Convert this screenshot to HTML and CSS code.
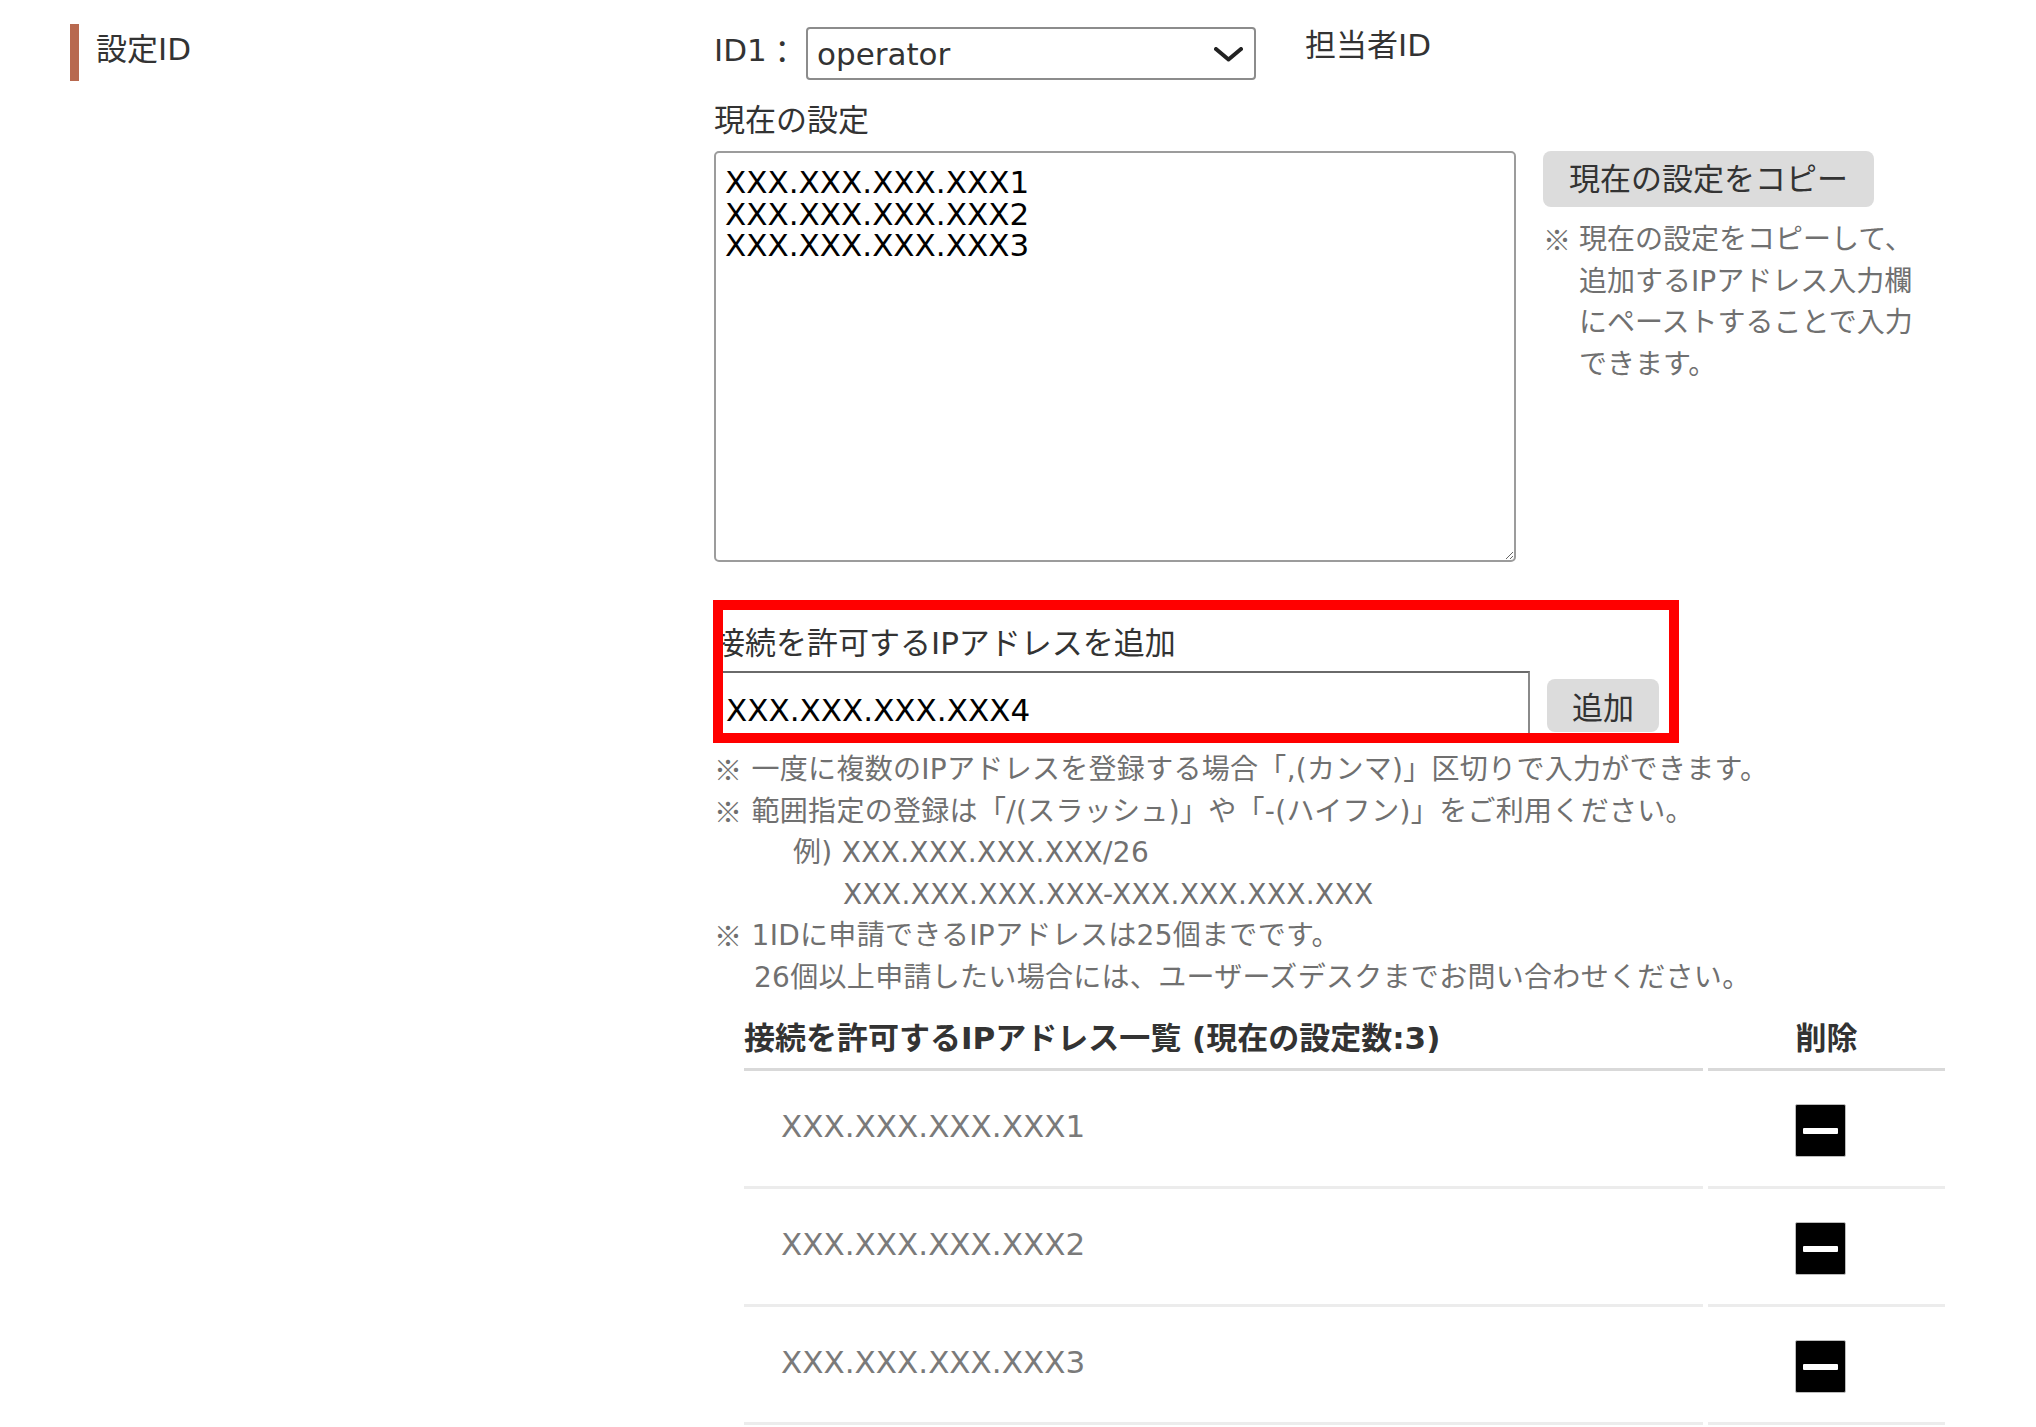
FILE: index.html
```html
<!DOCTYPE html>
<html>
<head>
  <meta charset="utf-8">
  <title>接続元IPアドレス設定</title>
  <link rel="stylesheet" href="styles.css">
</head>
<body>
  <div class="setting-row">
    <div class="setting-label">
      <span class="label-bar">設定ID</span>
    </div>

    <div class="setting-body">
      <div class="id-row">
        <label class="id-label" for="id1">ID1<span class="cjk">：</span></label>
        <div class="select-wrap">
          <select id="id1" class="id-select">
            <option>operator</option>
          </select>
          <svg class="select-arrow" viewBox="0 0 29 15">
            <polyline points="2,2 14.5,12.5 27,2" fill="none" stroke="#222" stroke-width="4" stroke-linecap="round" stroke-linejoin="round"/>
          </svg>
        </div>
        <span class="id-note">担当者ID</span>
      </div>

      <div class="field-title">現在の設定</div>
      <div class="current-row">
        <textarea class="current-list" readonly>XXX.XXX.XXX.XXX1
XXX.XXX.XXX.XXX2
XXX.XXX.XXX.XXX3</textarea>
        <div class="current-side">
          <button type="button" class="gray-btn copy-btn">現在の設定をコピー</button>
          <div class="side-note">
            <span class="mark">※</span>
            <span>現在の設定をコピーして、<br>追加するIPアドレス入力欄<br>にペーストすることで入力<br>できます。</span>
          </div>
        </div>
      </div>

      <div class="add-section">
        <div class="field-title add-title">接続を許可するIPアドレスを追加</div>
        <div class="add-row">
          <input type="text" class="add-input" value="XXX.XXX.XXX.XXX4">
          <button type="button" class="gray-btn add-btn">追加</button>
        </div>
        <!-- annotation frame -->
        <div class="highlight-box"></div>
      </div>

      <div class="add-notes">
        <div><span class="mark">※</span> 一度に複数のIPアドレスを登録する場合「,(カンマ)」区切りで入力ができます。</div>
        <div><span class="mark">※</span> 範囲指定の登録は「/(スラッシュ)」や「-(ハイフン)」をご利用ください。</div>
        <div class="indent-ex">例) XXX.XXX.XXX.XXX/26</div>
        <div class="indent-ex2">XXX.XXX.XXX.XXX-XXX.XXX.XXX.XXX</div>
        <div><span class="mark">※</span> 1IDに申請できるIPアドレスは25個までです。</div>
        <div class="indent-1">26個以上申請したい場合には、ユーザーズデスクまでお問い合わせください。</div>
      </div>

      <table class="ip-table">
        <thead>
          <tr>
            <th>接続を許可するIPアドレス一覧 (現在の設定数:3)</th>
            <th class="col-del">削除</th>
          </tr>
        </thead>
        <tbody>
          <tr>
            <td class="ip-cell">XXX.XXX.XXX.XXX1</td>
            <td class="del-cell"><button type="button" class="del-btn"><span></span></button></td>
          </tr>
          <tr>
            <td class="ip-cell">XXX.XXX.XXX.XXX2</td>
            <td class="del-cell"><button type="button" class="del-btn"><span></span></button></td>
          </tr>
          <tr>
            <td class="ip-cell">XXX.XXX.XXX.XXX3</td>
            <td class="del-cell"><button type="button" class="del-btn"><span></span></button></td>
          </tr>
        </tbody>
      </table>
    </div>
  </div>
</body>
</html>
```

FILE: styles.css
```css
* {
  margin: 0;
  padding: 0;
  box-sizing: border-box;
}

body {
  font-family: "DejaVu Sans", "Noto Sans CJK JP", sans-serif;
  font-size: 31px;
  color: #333;
  background: #fff;
}

.cjk,
.mark {
  font-family: "Noto Sans CJK JP", sans-serif;
  vertical-align: top;
}

.setting-row {
  display: flex;
  padding: 24px 0 0 70px;
}

.setting-label {
  width: 644px;
  flex-shrink: 0;
}

.label-bar {
  display: block;
  height: 57px;
  border-left: 9px solid #b8694f;
  padding-left: 17px;
  line-height: 50px;
}

.setting-body {
  flex: 1;
}

/* ID select row */
.id-row {
  display: flex;
  align-items: flex-start;
  line-height: 42px;
}

.id-label {
  width: 92px;
  margin-top: 5px;
}

.select-wrap {
  position: relative;
  width: 450px;
  height: 53px;
  margin-top: 3px;
}

.id-select {
  appearance: none;
  width: 100%;
  height: 100%;
  border: 2px solid #8c8c8c;
  border-radius: 4px;
  padding-left: 9px;
  font-family: inherit;
  font-size: 31px;
  color: #333;
  background: #fff;
}

.select-arrow {
  position: absolute;
  right: 13px;
  top: 20px;
  width: 29px;
  height: 15px;
  pointer-events: none;
}

.id-note {
  margin-left: 49px;
}

.field-title {
  line-height: 42px;
  margin-top: 19px;
}

/* current settings */
.current-row {
  display: flex;
  gap: 27px;
  margin-top: 10px;
}

.current-list {
  width: 802px;
  height: 411px;
  border: 2px solid #9c9c9c;
  border-radius: 5px;
  padding: 14px 9px;
  font-family: "DejaVu Sans", sans-serif;
  font-size: 31px;
  line-height: 31.5px;
  color: #000;
  resize: both;
}

.current-side {
  display: flex;
  flex-direction: column;
  align-items: flex-start;
}

.gray-btn {
  background: #dcdcdc;
  border: none;
  border-radius: 8px;
  font-family: inherit;
  font-size: 31px;
  color: #333;
  cursor: pointer;
}

.copy-btn {
  height: 56px;
  padding: 0 26px 6px;
}

.side-note {
  display: flex;
  margin-top: 12px;
  font-size: 28px;
  line-height: 41.5px;
  color: #707070;
  white-space: nowrap;
}

.side-note .mark {
  width: 36px;
  flex-shrink: 0;
}

/* add form */
.add-section {
  position: relative;
  margin-top: 38px;
  padding-top: 22px;
}

.add-title {
  margin-top: 0;
}

.add-row {
  display: flex;
  align-items: center;
  gap: 17px;
  margin-top: 7px;
}

.add-input {
  width: 816px;
  height: 68px;
  border: 2px solid #8a8a8a;
  border-top-color: #6a6a6a;
  padding: 10px 10px 0;
  font-family: "DejaVu Sans", sans-serif;
  font-size: 31px;
  color: #000;
  outline: none;
}

.add-btn {
  width: 112px;
  height: 53px;
}

.highlight-box {
  position: absolute;
  left: -1px;
  top: 0;
  width: 966px;
  height: 143px;
  border: 10px solid #ff0000;
  pointer-events: none;
}

.add-notes {
  margin-top: 10px;
  font-size: 28px;
  line-height: 41.5px;
  color: #707070;
  white-space: nowrap;
  letter-spacing: 0.3px;
}

.indent-ex {
  padding-left: 79px;
}

.indent-ex2 {
  padding-left: 129px;
}

.indent-1 {
  padding-left: 40px;
}

/* list table */
.ip-table {
  margin: 10px 0 0 25px;
  width: 1211px;
  border-collapse: separate;
  border-spacing: 5px 0;
}

.ip-table th {
  height: 63px;
  border-bottom: 3px solid #d9d9d9;
  font-size: 31px;
  font-weight: bold;
  text-align: left;
  line-height: 42px;
  color: #333;
  vertical-align: middle;
}

.ip-table th.col-del {
  width: 237px;
  text-align: center;
}

.ip-table td {
  height: 118px;
  border-bottom: 3px solid #ececec;
  vertical-align: middle;
}

.ip-cell {
  padding: 0 0 6px 37px;
  color: #7a7a7a;
}

.del-cell {
  text-align: center;
  padding-top: 4px;
}

.del-btn {
  display: inline-flex;
  align-items: center;
  justify-content: center;
  width: 51px;
  height: 53px;
  margin-right: 12px;
  background: #000;
  border: 1px solid #bbb;
  border-radius: 2px;
  cursor: pointer;
  vertical-align: middle;
}

.del-btn span {
  width: 35px;
  height: 6px;
  background: #fff;
  border-radius: 1px;
}
```
